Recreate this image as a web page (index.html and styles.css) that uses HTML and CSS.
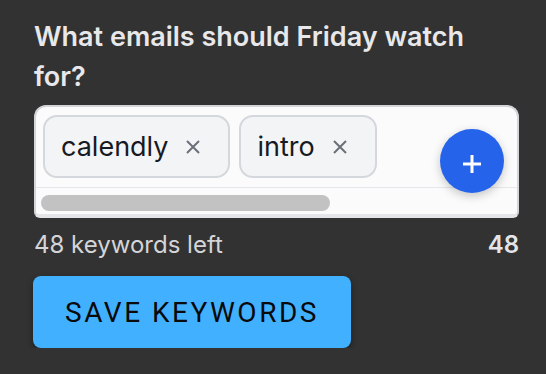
FILE: index.html
```html
<!DOCTYPE html>
<html lang="en">
<head>
    <meta charset="UTF-8">
    <title>Keywords</title>
    <link rel="stylesheet" href="styles.css">
</head>
<body>
<div class="panel">
    <h2 class="title">What emails should Friday watch for?</h2>

    <div class="box">
        <div class="chips">
            <span class="chip">calendly
                <svg class="x" viewBox="0 0 14 14"><path d="M1 1L13 13M13 1L1 13"/></svg>
            </span>
            <span class="chip">intro
                <svg class="x" viewBox="0 0 14 14"><path d="M1 1L13 13M13 1L1 13"/></svg>
            </span>
        </div>
        <div class="track">
            <div class="thumb"></div>
        </div>
        <button class="fab">
            <svg viewBox="0 0 18 18"><path d="M9 0V18M0 9H18"/></svg>
        </button>
    </div>

    <div class="meta">
        <span class="left">48 keywords left</span>
        <span class="count">48</span>
    </div>

    <button class="save">SAVE KEYWORDS</button>
</div>
</body>
</html>
```

FILE: styles.css
```css
*{
    margin: 0;
    padding: 0;
    box-sizing: border-box;
}

body{
    background: #323232;
    font-family: Inter, "Noto Sans", sans-serif;
}

.panel{
    padding: 17px 27px 0 34px;
}

.title{
    max-width: 460px;
    font-size: 27px;
    line-height: 40px;
    font-weight: 600;
    color: #e8e8ea;
}

.box{
    position: relative;
    margin-top: 8px;
    height: 113px;
    background: #fbfbfb;
    border: 2px solid #d3d5d9;
    border-bottom: 4px solid #e4e5e8;
    border-radius: 12px 12px 6px 6px;
    overflow: hidden;
}

.chips{
    display: flex;
    gap: 9px;
    padding: 8px 7px 9px;
    border-bottom: 1px solid #e6e7ea;
}

.chip{
    display: flex;
    align-items: center;
    gap: 18px;
    height: 63px;
    padding: 0 28px 0 16px;
    background: #f3f4f6;
    border: 2px solid #d4d7dc;
    border-radius: 14px;
    font-size: 27px;
    color: #171a22;
}

.chip .x{
    width: 14px;
    height: 14px;
    stroke: #6b6f78;
    stroke-width: 2;
    fill: none;
}

.track{
    padding: 7px 5px;
}

.thumb{
    width: 289px;
    height: 16px;
    border-radius: 8px;
    background: #c2c2c2;
}

.fab{
    position: absolute;
    top: 22px;
    right: 13px;
    width: 64px;
    height: 64px;
    border: none;
    border-radius: 50%;
    background: #2563eb;
    box-shadow: 0 3px 10px rgba(0,0,0,.22);
    display: flex;
    align-items: center;
    justify-content: center;
    padding-top: 5px;
}

.fab svg{
    width: 18px;
    height: 18px;
    stroke: #fff;
    stroke-width: 3;
}

.meta{
    display: flex;
    justify-content: space-between;
    margin-top: 12px;
    font-size: 24px;
    line-height: 30px;
    color: #d4d5d8;
}

.meta .count{
    font-weight: 600;
    color: #e4e5e8;
}

.save{
    display: block;
    margin: 16px 0 0 -1px;
    width: 318px;
    height: 72px;
    border: none;
    border-radius: 8px;
    background: #41b1ff;
    box-shadow: 0 3px 6px rgba(0,0,0,.4);
    font-family: Roboto, "Liberation Sans", sans-serif;
    font-size: 28px;
    letter-spacing: 2.5px;
    color: #0a0a0a;
}
```
